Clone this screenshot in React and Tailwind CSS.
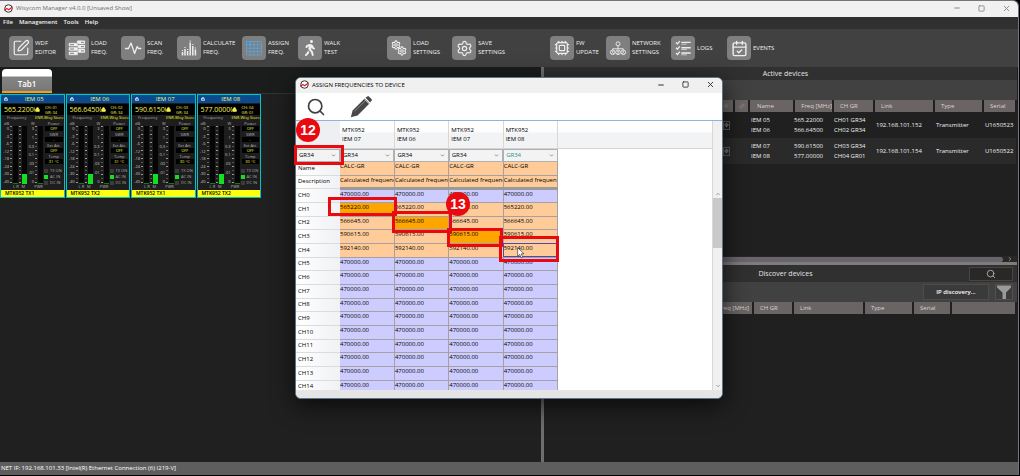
import React from "react";
import {
  SquarePen,
  Cpu,
  Settings,
  CalendarCheck,
  Search,
  Minus,
  Square,
  X,
  ChevronDown,
  ChevronUp,
  Lock,
  Link2,
  Zap,
  ChevronRight,
} from "lucide-react";
import { FaWalking } from "react-icons/fa";

function Logo() {
  return (
    <svg viewBox="0 0 18 18" className="size-[9px] shrink-0" aria-hidden="true">
      <circle cx="9" cy="9" r="7.5" fill="#fff" stroke="#333" strokeWidth="2" />
      <path d="M0 11 L6 7.5 L9 10 L17 4.5 L17 8 L9 13 L6 10.5 L1 14 Z" fill="#e0202a" />
    </svg>
  );
}

function StackIcon() {
  return (
    <svg viewBox="0 0 24 24" className="size-6">
      {[4.5, 8.8, 13.1].map((y) => (
        <g key={"r" + y}>
          <rect x="12" y={y} width="8" height="3.6" rx="0.8" fill="#eee" />
          <rect x="16" y={y + 1.3} width="3" height="1" fill="#808080" />
        </g>
      ))}
      {[6.8, 11.1, 15.4].map((y) => (
        <g key={"l" + y}>
          <rect x="3.6" y={y} width="9.4" height="3.8" rx="0.8" fill="#f2f2f2" stroke="#808080" strokeWidth="0.5" />
          <rect x="5" y={y + 1.4} width="4" height="1" fill="#808080" />
        </g>
      ))}
    </svg>
  );
}

function WaveIcon() {
  return (
    <svg viewBox="0 0 24 24" className="size-6" fill="none" stroke="#eee" strokeWidth="1.3" strokeLinejoin="round" strokeLinecap="round">
      <path d="M4.5 12.5h3l2.5-5.5 3.6 10.5 2.6-7 1.2 2h2.4" />
    </svg>
  );
}

function BarsIcon() {
  const bars = [
    [5.5, 15], [8, 12], [10.6, 14], [13.2, 5.5], [15.8, 9], [18.4, 12.5],
  ];
  return (
    <svg viewBox="0 0 24 24" className="size-6" stroke="#eee" strokeWidth="1.5">
      {bars.map(([x, y]) => (
        <g key={x}>
          <path d={`M${x} 19.5V${y + 1}`} />
          <path d={`M${x} ${y}v-0.9`} strokeWidth="1.2" />
        </g>
      ))}
    </svg>
  );
}

function GridIcon() {
  return (
    <svg viewBox="0 0 24 24" className="size-6" stroke="#5aa6dc" fill="none" strokeWidth="0.8">
      <rect x="4.5" y="5.5" width="15" height="13.5" rx="0.8" />
      <rect x="4.5" y="5.5" width="3.5" height="3" fill="#2d8fd8" />
      <path d="M4.5 8.8h15M4.5 12.2h15M4.5 15.6h15M8.2 5.5V19M12 5.5V19M15.8 5.5V19" />
    </svg>
  );
}

function GearsIcon() {
  return (
    <div className="relative size-6 text-[#eeeeee]">
      <Settings className="absolute left-1 top-1 size-[10px]" strokeWidth={2.6} />
      <Settings className="absolute bottom-1 right-1 size-[10px]" strokeWidth={2.6} />
    </div>
  );
}

function NetIcon() {
  return (
    <svg viewBox="0 0 24 24" className="size-6" fill="none" stroke="#eee" strokeWidth="0.9">
      <circle cx="12" cy="7.8" r="2" />
      <path d="M12 9.8V13M6.7 14v-1.2h10.6V14" />
      {[6.7, 12, 17.3].map((x) => (
        <g key={x}>
          <circle cx={x} cy="16.3" r="2.3" />
          <path d={`M${x - 1.2} 17.6q1.2 -1.8 2.4 0`} />
          <circle cx={x} cy="15.6" r="0.4" />
        </g>
      ))}
    </svg>
  );
}

function LogsIcon() {
  return (
    <svg viewBox="0 0 24 24" className="size-6" fill="none" stroke="#eee">
      {[7, 12.3, 17.6].map((y) => (
        <g key={y}>
          <path d={`M5 ${y - 0.5}l1.4 1.4 2.4 -2.8`} strokeWidth="1.3" />
          <path d={`M10.3 ${y - 0.6}h9.4`} strokeWidth="1.4" />
          <path d={`M10.3 ${y + 1.2}h5.5`} strokeWidth="0.7" />
        </g>
      ))}
    </svg>
  );
}

function Tool({ wide, icon, children }) {
  return (
    <button className={"flex items-center gap-[2px] text-left " + (wide ? "w-[65px]" : "w-14")}>
      <span className="flex size-6 shrink-0 items-center justify-center rounded bg-[#7f7f7f] text-[#eeeeee]">{icon}</span>
      <span className="whitespace-pre text-[6px] leading-[9px] text-[#f0f0f0]">{children}</span>
    </button>
  );
}

function TitleButtons({ className }) {
  return (
    <div className={"ml-auto flex items-center gap-[17px] " + className}>
      <button aria-label="Minimize"><Minus className="size-2" strokeWidth={3} /></button>
      <button aria-label="Maximize"><Square className="size-[7px]" strokeWidth={3} /></button>
      <button aria-label="Close"><X className="size-[9px]" strokeWidth={2.5} /></button>
    </div>
  );
}

function Meter({ level }) {
  return (
    <div className="flex w-[5px] flex-col justify-end bg-[#050505]">
      <div className={level ? "h-[10px] bg-[#10e020]" : "h-px bg-[#0a8010]"} />
    </div>
  );
}

function Ticks() {
  return (
    <svg viewBox="0 0 2 58" className="h-[58px] w-[2px]" aria-hidden="true">
      {Array.from({ length: 15 }, (_, i) => (
        <rect key={i} x="0" y={i * 4} width="2" height="1" fill={i % 2 ? "#555" : "#999"} />
      ))}
    </svg>
  );
}

function Scale({ labels, w }) {
  return (
    <div className={"flex flex-col justify-between text-right text-[4px] leading-[5px] text-[#c4c4c4] " + w}>
      {labels.map((l, i) => (
        <span key={i}>{l}</span>
      ))}
    </div>
  );
}

function Reading({ label, value }) {
  return (
    <div className="mb-px">
      <div className="text-[4px] leading-[5px] text-[#b8b8b8]">{label}</div>
      <div className="mx-px h-[5px] bg-black text-[4px] leading-[5px] text-[#f4f430]">{value}</div>
    </div>
  );
}

function Led({ on, children }) {
  return (
    <div className="flex items-center gap-[2px] text-[4px] leading-[6px] whitespace-nowrap text-[#a8a8a8]">
      <span className={"size-1 " + (on ? "bg-[#10e020]" : "bg-[#3a3a3a]")} />
      {children}
    </div>
  );
}

function Device({ name, freq, ch, gr, temp, tx }) {
  return (
    <section className="flex h-[104px] min-w-0 flex-col overflow-hidden border border-[#00c4cc] bg-[#1d1d1d]">
      <header className="flex h-2 shrink-0 items-center bg-[#0b4a8c] pl-[3px] text-[#f0f080]">
        <Lock className="size-1 text-white" strokeWidth={4} />
        <span className="flex-1 pr-[3px] text-center text-[6px] leading-[8px]">{name}</span>
      </header>
      <div className="mt-px flex h-[11px] shrink-0 items-center bg-black pl-[3px] text-[#f6f650]">
        <span className="w-[31px] shrink-0 overflow-hidden text-[7px] leading-[11px]">{freq}</span>
        <Lock className="size-[5px] fill-current" strokeWidth={3} />
        <span className="ml-[5px] whitespace-pre text-[4px] leading-[5px]">{`CH: ${ch}\nGR: ${gr}`}</span>
      </div>
      <div className="flex h-[6px] shrink-0 items-center justify-between pl-[6px] text-[4px] leading-[6px] whitespace-nowrap">
        <span className="text-[#b0b0b0]">Frequency</span>
        <span className="text-[#f0f030]">ENR-Wisy Store</span>
      </div>
      <div className="flex min-h-0 flex-1 pl-px">
        <div className="shrink-0">
          <div className="flex h-[5px] gap-[22px] pl-[2px] text-[4px] leading-[5px] text-[#b0b0b0]"><span>dB</span><span>W</span></div>
          <div className="flex h-[58px] gap-px">
            <Scale w="w-[7px]" labels={["0", "-3", "-6", "-12", "-18", "-24", "-30", "-40"]} />
            <Ticks />
            <Meter />
            <Ticks />
            <Meter level />
            <Scale w="w-[6px]" labels={["3", "1", "0.3", "0.1", ".03", ".01", "0"]} />
            <Ticks />
            <Meter />
          </div>
          <div className="flex gap-[3px] pl-[11px] text-[4px] leading-[5px] text-[#b0b0b0]">
            <span>L R</span><span>M</span><span className="ml-[6px]">PWR</span>
          </div>
        </div>
        <div className="ml-px flex flex-1 flex-col text-center whitespace-nowrap">
          <Reading label="Power" value="OFF" />
          <Reading label="SWR" value="-" />
          <Reading label="Ext Att." value="OFF" />
          <Reading label="Temp" value={temp} />
          <div className="mt-[3px]">
            <Led>TX ON</Led>
            <Led on>AC IN</Led>
            <Led>DC IN</Led>
          </div>
        </div>
      </div>
      <footer className="h-[7px] shrink-0 bg-[#ffff10] pl-[4px] text-[5px] leading-[7px] font-semibold text-black">{tx}</footer>
    </section>
  );
}

const devices = [
  { name: "IEM 05", freq: "565.22000", ch: "01", gr: "34", temp: "31 °C", tx: "MTK952 TX1" },
  { name: "IEM 06", freq: "566.64500", ch: "02", gr: "34", temp: "31 °C", tx: "MTK952 TX2" },
  { name: "IEM 07", freq: "590.61500", ch: "03", gr: "34", temp: "30 °C", tx: "MTK952 TX1" },
  { name: "IEM 08", freq: "577.00000", ch: "04", gr: "01", temp: "30 °C", tx: "MTK952 TX2" },
];

const active = [
  { names: "IEM 05\nIEM 06", freqs: "565.22000\n566.64500", ch: "CH01 GR34\nCH02 GR34", link: "192.168.101.152", serial: "U1650523" },
  { names: "IEM 07\nIEM 08", freqs: "590.61500\n577.00000", ch: "CH03 GR34\nCH04 GR01", link: "192.168.101.154", serial: "U1650522" },
];

const thBase = "h-3 border-r-2 border-[#202020] bg-[#6a6464] p-0 text-[6px] leading-3 font-normal text-[#d8d4d4]";

function ActiveDevices() {
  return (
    <section className="flex h-[195px] flex-col bg-[#202020]">
      <h2 className="h-[13px] bg-[#303030] pl-[10px] text-center text-[7px] leading-[14px] text-[#e4e4e4]">Active devices</h2>
      <div className="h-5 bg-[#414141]" />
      <table className="w-full table-fixed border-collapse text-[#f0f0f0]">
        <colgroup>
          <col />
          <col className="w-[15px]" />
          <col className="w-[45px]" />
          <col className="w-[39px]" />
          <col className="w-[41px]" />
          <col className="w-[60px]" />
          <col className="w-[49px]" />
          <col className="w-[33px]" />
        </colgroup>
        <thead>
          <tr>
            <th className={thBase} aria-label="Battery"><Zap className="ml-auto mr-1 size-[6px] text-[#a09c9c]" /></th>
            <th className={thBase} aria-label="Linked"><Link2 className="mx-auto size-[6px] -rotate-45 text-[#a09c9c]" /></th>
            <th className={thBase + " pl-[7px] text-left"}>Name</th>
            <th className={thBase + " text-right"}>Freq [MHz]</th>
            <th className={thBase + " pl-[6px] text-left"}>CH GR</th>
            <th className={thBase + " pl-[6px] text-left"}>Link</th>
            <th className={thBase + " pl-[6px] text-left"}>Type</th>
            <th className={thBase + " pl-[6px] text-left"}>Serial</th>
          </tr>
        </thead>
        <tbody className="text-[6px] leading-[10px]">
          {active.map((r) => (
            <tr key={r.serial} className="h-[26px] whitespace-pre even:bg-[#2a2a2a]">
              <td className="p-0">
                <span className="mr-1 ml-auto flex h-[9px] w-[7px] items-center justify-center border border-[#5c5c5c]">
                  <Zap className="size-[6px] text-[#c8c8c8]" strokeWidth={2.5} />
                </span>
              </td>
              <td className="p-0" />
              <td className="p-0 pl-[2px]">{r.names}</td>
              <td className="p-0">{r.freqs}</td>
              <td className="p-0 pl-px">{r.ch}</td>
              <td className="p-0 pl-[2px]">{r.link}</td>
              <td className="p-0 pl-[2px]">Transmitter</td>
              <td className="p-0 pl-[2px]">{r.serial}</td>
            </tr>
          ))}
        </tbody>
      </table>
      <div className="mt-auto flex h-[6px] items-center bg-[#2a2626]">
        <div className="h-[5px] flex-1 rounded-r bg-[#69656c]" />
        <ChevronRight className="mx-1 size-[6px] text-[#aaaaaa]" strokeWidth={3} />
      </div>
    </section>
  );
}

function DiscoverDevices() {
  return (
    <section className="flex min-h-0 flex-1 flex-col bg-[#202020]">
      <div className="flex h-[17px] items-center bg-[#303030] pr-1">
        <h2 className="flex-1 pl-[58px] text-center text-[7px] leading-[14px] text-[#e4e4e4]">Discover devices</h2>
        <button aria-label="Search devices" className="flex h-[14px] w-11 items-center justify-center border border-[#484444] bg-[#2a2727] text-[#c8c8c8]">
          <Search className="size-[10px]" strokeWidth={1.8} />
        </button>
      </div>
      <div className="flex h-5 shrink-0 items-center justify-end gap-[6px] bg-[#414141] pr-1">
        <button className="h-4 w-[66px] border border-[#4c4c4c] bg-[#3a3a3a] text-[6px] font-semibold text-white">IP discovery...</button>
        <button aria-label="Filter" className="flex h-4 w-[18px] items-center justify-center border border-[#505050] bg-[#3c3c3c]">
          <svg viewBox="0 0 14 14" className="size-[14px]"><path d="M0 0.5h14v2L9 7.5V14H5.5V7.5L0 2.5Z" fill="#9a9a9a" /></svg>
        </button>
      </div>
      <table className="w-full table-fixed border-collapse">
        <colgroup>
          <col />
          <col className="w-[40px]" />
          <col className="w-[71px]" />
          <col className="w-[49px]" />
          <col className="w-[38px]" />
          <col className="w-[65px]" />
        </colgroup>
        <thead>
          <tr>
            <th className={thBase + " pr-[3px] text-right"}>Freq [MHz]</th>
            <th className={thBase + " pl-[6px] text-left"}>CH GR</th>
            <th className={thBase + " pl-[6px] text-left"}>Link</th>
            <th className={thBase + " pl-[6px] text-left"}>Type</th>
            <th className={thBase + " pl-[6px] text-left"}>Serial</th>
            <th className={thBase} aria-label="Other" />
          </tr>
        </thead>
      </table>
    </section>
  );
}

const heads = ["MTK952\nIEM 07", "MTK952\nIEM 06", "MTK952\nIEM 07", "MTK952\nIEM 08"];
const channels = ["470000.00", "565220.00", "566645.00", "590615.00", "592140.00"].concat(Array(10).fill("470000.00"));
const rowHead =
  "border-b border-[#dcdcdc] bg-linear-to-r from-white to-[#f0f1f4] p-0 pl-[2px] text-left align-middle font-normal";

function GroupSelect({ label, color }) {
  return (
    <div className="relative flex h-[13px] items-center border border-[#b0b0b0] bg-[#f3f3f3]">
      <select aria-label={label} defaultValue="GR34" className={"w-full appearance-none bg-transparent pl-[2px] text-[6px] leading-[10px] outline-none " + color}>
        <option>GR34</option>
      </select>
      <ChevronDown className="pointer-events-none absolute right-[3px] top-[3px] size-[5px] text-[#555555]" strokeWidth={3} />
    </div>
  );
}

function ChannelTable() {
  return (
    <table className="w-[262px] table-fixed border-collapse text-[6px] leading-[9px] text-black">
      <colgroup>
        <col className="w-11" />
        <col />
        <col />
        <col />
        <col />
      </colgroup>
      <thead>
        <tr className="h-[27px]">
          <th className="bg-[#eeeff2] p-0" aria-label="Channel" />
          {heads.map((h, i) => (
            <th key={i} className="whitespace-pre border-r border-[#d8d8d8] p-0 pl-[2px] text-left font-normal">{h}</th>
          ))}
        </tr>
        <tr className="h-[14px]">
          <th className="p-0 font-normal"><GroupSelect label="Group for all" color="text-black" /></th>
          {heads.map((h, i) => (
            <th key={i} className="p-0 font-normal">
              <GroupSelect label={"Group " + (i + 1)} color={i === 3 ? "text-[#2a9494]" : "text-black"} />
            </th>
          ))}
        </tr>
      </thead>
      <tbody>
        <tr className="h-[13px]">
          <th className={rowHead}>Name</th>
          {heads.map((h, i) => (
            <td key={i} className="border-r border-b border-[#a8a0a0] bg-[#ffcc99] p-0 align-top">CALC-GR</td>
          ))}
        </tr>
        <tr className="h-[13px]">
          <th className={rowHead}>Description</th>
          {heads.map((h, i) => (
            <td key={i} className="border-r border-b-3 border-r-[#a8a0a0] border-b-[#9a9a9a] bg-[#ffcc99] p-0 align-top">
              <div className="overflow-hidden whitespace-nowrap">Calculated frequency</div>
            </td>
          ))}
        </tr>
        {channels.map((f, r) => (
          <tr key={r} className={r % 3 === 2 ? "h-[13px]" : "h-[14px]"}>
            <th className={rowHead}>CH{r}</th>
            {heads.map((h, c) => {
              const picked = r === c + 1 && c < 3;
              const bg = picked ? "bg-[#ffa500]" : r > 0 && r < 5 ? "bg-[#ffcc99]" : "bg-[#ccccff]";
              return (
                <td key={c} className={"border-r border-b border-[#a4a0a4] p-0 align-top " + bg}>{f}</td>
              );
            })}
          </tr>
        ))}
      </tbody>
    </table>
  );
}

function AssignDialog() {
  return (
    <div role="dialog" aria-label="Assign frequencies to device" className="absolute left-[295px] top-[77px] flex h-[322px] w-[428px] flex-col overflow-hidden rounded-md border border-[#5f7488] bg-white shadow-[0_6px_24px_rgba(0,0,0,0.7)]">
      <header className="flex h-[15px] shrink-0 items-center gap-[3px] bg-[#f0f0f0] pb-[2px] pl-1 pr-[7px] text-black">
        <Logo />
        <h1 className="text-[6px] leading-[10px]">ASSIGN FREQUENCIES TO DEVICE</h1>
        <TitleButtons className="text-[#333333]" />
      </header>
      <div className="flex h-7 shrink-0 items-center gap-6 border-b border-[#8db4dc] pl-[10px] text-[#404040]">
        <button aria-label="Search"><Search className="size-5" strokeWidth={2} /></button>
        <button aria-label="Edit">
          <svg viewBox="0 0 22 22" className="size-[22px]" fill="#484848">
            <path d="M0.8 21.2l1.8-6.8L14.6 2.6l4.9 4.9L7.6 19.4Z" />
            <path d="M15.5 1.8l1.8-1.4q.8-.6 1.6.1l2.6 2.6q.7.8 0 1.6l-1.4 1.7Z" />
            <path d="M14.2 3l4.9 4.9" stroke="#fff" strokeWidth="0.6" fill="none" />
            <path d="M4.5 15.3l11-10.8" stroke="#bbb" strokeWidth="0.5" fill="none" />
          </svg>
        </button>
      </div>
      <div className="flex min-h-0 flex-1">
        <div className="flex-1 overflow-hidden bg-[linear-gradient(to_bottom,#ffffff_0px,#fdfdfe_11px,#f2f3f5_12px,#f2f3f5_27px,#d4d4d8_27px,#d4d4d8_28px,#ffffff_28px)]">
          <ChannelTable />
        </div>
        <div className="flex w-[10px] flex-col items-center border-l border-[#d8d8d8] bg-[#f0f0f0] pt-[70px] text-[#888888]">
          <ChevronUp className="size-[6px]" strokeWidth={3} />
          <div className="mt-px h-[50px] w-full bg-[#c9c9c9]" />
          <ChevronDown className="mt-auto mb-px size-[6px]" strokeWidth={3} />
        </div>
      </div>
      <div className="h-2 shrink-0 bg-[#e5e5e5]" />
    </div>
  );
}

function Annotations() {
  const box = "absolute border-[3px] border-[#e80a0e] ";
  const dot = "absolute flex size-6 items-center justify-center rounded-full bg-[#e80a0e] font-['Liberation_Sans'] text-[14px] font-bold text-white ";
  return (
    <div className="pointer-events-none">
      <div className={box + "left-[294px] top-[145px] h-5 w-[50px]"} />
      <div className={box + "left-[328px] top-[197px] h-[19px] w-[69px]"} />
      <div className={box + "left-[392px] top-[211px] h-[22px] w-[60px]"} />
      <div className={box + "left-[447px] top-[228px] h-[19px] w-[56px]"} />
      <div className="absolute left-[503px] top-[243px] h-[14px] w-[54px] border border-[#4a4ab0]" />
      <div className={box + "left-[499px] top-[236px] h-[26px] w-[60px]"} />
      <div className={dot + "left-[296px] top-[118px]"}>12</div>
      <div className={dot + "left-[446px] top-[192px]"}>13</div>
      <svg viewBox="0 0 12 18" className="absolute left-[517px] top-[247px] h-3 w-2">
        <path d="M1 1v13l3-3 2.2 5.4 2.4-1L6.4 10.2H10.6Z" fill="#fff" stroke="#333" strokeWidth="1" />
      </svg>
    </div>
  );
}

export default function App() {
  return (
    <div className="relative flex h-screen flex-col overflow-hidden bg-black pr-px pb-px font-['Open_Sans',sans-serif]">
      <div className="flex min-h-0 flex-1 flex-col overflow-hidden rounded-tr-md border-t border-r border-[#77737a]">
        <header className="flex h-4 shrink-0 items-center gap-[3px] bg-[#f1f1f1] pb-[2px] pl-1 pr-[7px] text-[#6e6e6e]">
          <Logo />
          <span className="text-[6px] leading-[10px]">Wisycom Manager v4.0.0 [Unsaved Show]</span>
          <TitleButtons className="text-[#8a8a8a]" />
        </header>
        <nav className="flex h-3 shrink-0 items-center gap-[6px] bg-[#303030] pb-[2px] pl-[3px] text-[6px] leading-[10px] font-semibold text-[#f0f0f0]">
          <button>File</button>
          <button>Management</button>
          <button>Tools</button>
          <button>Help</button>
        </nav>
        <div className="flex h-[38px] shrink-0 items-center gap-[33px] bg-[#414141] pl-[9px]">
          <div className="flex">
            <Tool icon={<SquarePen className="size-[18px]" strokeWidth={1.6} />}>{"WDF\nEDITOR"}</Tool>
            <Tool icon={<StackIcon />}>{"LOAD\nFREQ."}</Tool>
            <Tool icon={<WaveIcon />}>{"SCAN\nFREQ."}</Tool>
            <Tool wide icon={<BarsIcon />}>{"CALCULATE\nFREQ."}</Tool>
            <Tool icon={<GridIcon />}>{"ASSIGN\nFREQ."}</Tool>
            <Tool icon={<FaWalking className="size-4" />}>{"WALK\nTEST"}</Tool>
          </div>
          <div className="flex">
            <Tool wide icon={<GearsIcon />}>{"LOAD\nSETTINGS"}</Tool>
            <Tool wide icon={<Settings className="size-[17px]" strokeWidth={1.7} />}>{"SAVE\nSETTINGS"}</Tool>
          </div>
          <div className="flex">
            <Tool icon={<Cpu className="size-4" strokeWidth={1.8} />}>{"FW\nUPDATE"}</Tool>
            <Tool wide icon={<NetIcon />}>{"NETWORK\nSETTINGS"}</Tool>
            <Tool icon={<LogsIcon />}>LOGS</Tool>
            <Tool icon={<CalendarCheck className="size-[17px]" strokeWidth={2} />}>EVENTS</Tool>
          </div>
        </div>
        <main className="grid min-h-0 flex-1 grid-cols-[541fr_3px_474fr]">
          <div className="bg-[#202020]">
            <div className="flex h-[27px] items-end border-b border-[#333333] bg-[#1b1c1c] pl-[2px]">
              <button className="h-6 w-[50px] rounded-t-[4px] border-b-2 border-[#f0a020] bg-[linear-gradient(to_bottom,#ffffff_7px,#848484_8px,#787878)] pt-[7px] text-[8px] leading-[14px] font-semibold text-white">Tab1</button>
            </div>
            <div className="grid w-[261px] grid-cols-4 gap-px">
              {devices.map((d) => (
                <Device key={d.name} {...d} />
              ))}
            </div>
          </div>
          <div className="bg-[#6e6e70]" />
          <div className="flex min-h-0 flex-col bg-[#202020] pr-px">
            <ActiveDevices />
            <div className="h-[3px] shrink-0 bg-[#7c7c7c]" />
            <DiscoverDevices />
          </div>
        </main>
        <footer className="h-[13px] shrink-0 bg-[#5e5e5e] pl-px text-[6px] leading-[13px] text-white">
          NET IF: 192.168.101.33 [Intel(R) Ethernet Connection (6) I219-V]
        </footer>
      </div>
      <AssignDialog />
      <Annotations />
    </div>
  );
}
